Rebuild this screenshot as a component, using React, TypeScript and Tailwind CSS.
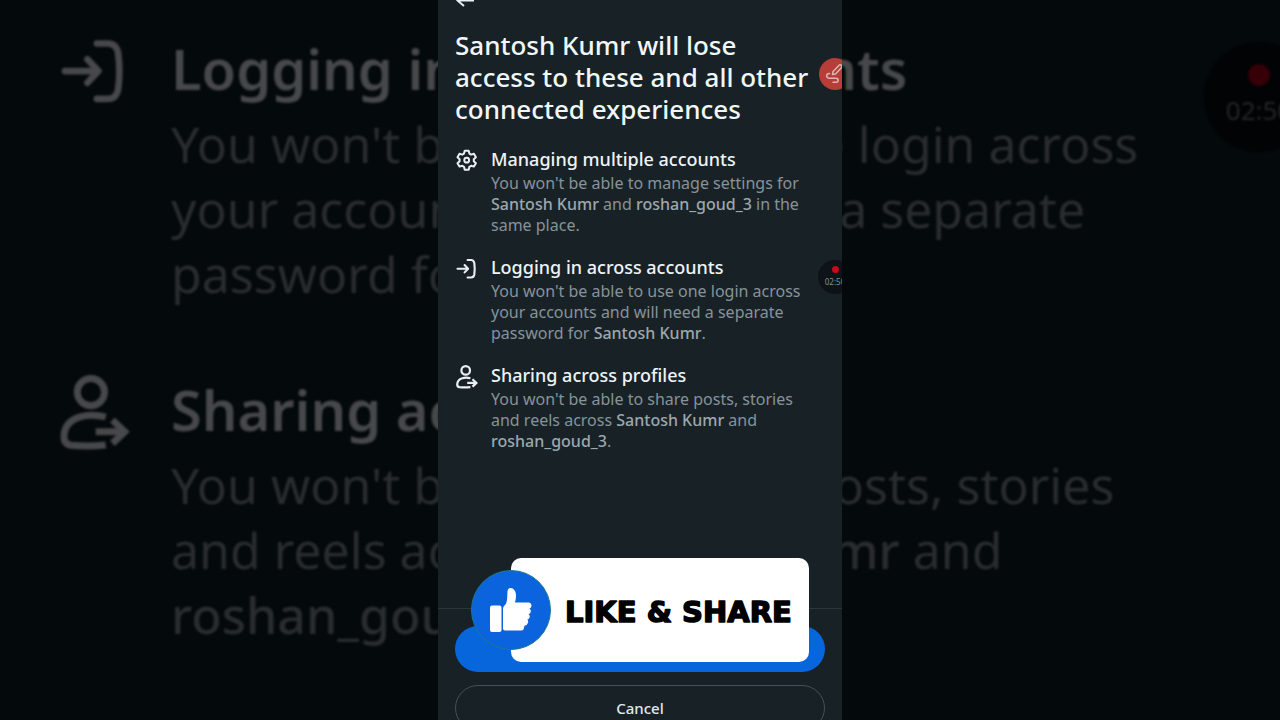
import type { ReactNode } from "react";
import { clsx } from "clsx";

type Experience = {
  title: string;
  icon: ReactNode;
  lines: ReactNode[];
};

function GearIcon() {
  return (
    <svg viewBox="0 0 24 24" fill="none" stroke="currentColor" strokeWidth="2" strokeLinejoin="round" className="size-full">
      <path d="M9.7 1.700h4l.7 2.900 1.700 1 2.800-.8 2 3.400-2.100 2v2l2.100 2-2 3.400-2.800-.8-1.700 1-.7 2.900h-4l-.7-2.900-1.700-1-2.800.8-2-3.400 2.100-2v-2l-2.100-2 2-3.400 2.800.8 1.700-1z" />
      <circle cx="11.700" cy="11.200" r="2.400" />
    </svg>
  );
}

function LoginIcon() {
  return (
    <svg viewBox="0 0 24 24" fill="none" stroke="currentColor" strokeWidth="2.100" strokeLinecap="round" strokeLinejoin="round" className="size-full">
      <path d="M2.500 11.700h10.500M9.600 8l3.500 3.700-3.500 3.700" />
      <path d="M12.600 3h3.500q2.600 0 3.200 3 .8 5.800 0 11.500-.6 3-3.200 3h-3.500" />
    </svg>
  );
}

function ShareProfileIcon() {
  return (
    <svg viewBox="0 0 24 24" fill="none" stroke="currentColor" strokeWidth="2.200" className="size-full">
      <circle cx="10.700" cy="5.400" r="4.300" />
      <path d="M15.400 13.200Q10.800 12.200 7.300 13.200 2.300 14.700 2.200 19.500q0 2.400 2.300 2.700 5.500.5 10.900-.1" />
      <path d="M12.200 17.900h9.300" />
      <path d="M17.500 14.200l3.900 3.700-3.900 3.700" />
    </svg>
  );
}

const experiences: Experience[] = [
  {
    title: "Managing multiple accounts",
    icon: <GearIcon />,
    lines: [
      "You won't be able to manage settings for",
      <><b>Santosh Kumr</b> and <b>roshan_goud_3</b> in the</>,
      "same place.",
    ],
  },
  {
    title: "Logging in across accounts",
    icon: <LoginIcon />,
    lines: [
      "You won't be able to use one login across",
      "your accounts and will need a separate",
      <>password for <b>Santosh Kumr</b>.</>,
    ],
  },
  {
    title: "Sharing across profiles",
    icon: <ShareProfileIcon />,
    lines: [
      "You won't be able to share posts, stories",
      <>and reels across <b>Santosh Kumr</b> and</>,
      <><b>roshan_goud_3</b>.</>,
    ],
  },
];

function ExperienceItem({ item, large = false }: { item: Experience; large?: boolean }) {
  return (
    <li className="flex whitespace-nowrap">
      <div className={clsx("shrink-0", large ? "w-[114px] pt-2" : "w-9 pt-0.5")}>
        <div className={clsx(large ? "size-[76px] text-[#47484a]" : "size-6 text-[#e9eff2]")}>{item.icon}</div>
      </div>
      <div>
        <h2 className={clsx(large ? "text-[56px] leading-[84px] font-semibold text-[#47484a]" : "text-lg leading-6 font-medium text-[#eef3f6]")}>
          {item.title}
        </h2>
        <p className={clsx("mt-0.5 [&_b]:font-medium", large ? "text-[50px] leading-[65px] text-[#2a2d2f]" : "text-base leading-[21px] text-[#87929a] [&_b]:text-[#9ca7ae]")}>
          {item.lines.map((line, i) => (
            <span key={i} className="block">
              {line}
            </span>
          ))}
        </p>
      </div>
    </li>
  );
}

function Backdrop() {
  return (
    <div aria-hidden="true" className="absolute inset-0 flex justify-center overflow-hidden">
      <ul className="flex w-[1166px] shrink-0 flex-col gap-[60px] pt-[26px] blur-[1px]">
        {experiences.slice(1).map((item) => (
          <ExperienceItem key={item.title} item={item} large />
        ))}
      </ul>
      <div className="absolute top-[42px] -right-[34px] flex size-[110px] flex-col items-center rounded-full bg-[#020304] pt-[22px] blur-[1px]">
        <span className="size-[22px] rounded-full bg-[#350008]" />
        <span className="mt-2.5 text-[26px] leading-7 text-[#222426]">02:50</span>
      </div>
    </div>
  );
}

function LikeSticker() {
  return (
    <div className="absolute bottom-[58px] left-[73px] flex h-[104px] w-[298px] items-center rounded-[10px] bg-white">
      <div className="-ml-10 flex size-20 shrink-0 items-center justify-center rounded-full border border-[#1c7a8a] bg-[#0b63dd]">
        <svg viewBox="0 0 42 44" fill="#fff" className="h-11 w-[42px]">
          <rect x="0" y="17.500" width="11.500" height="26.500" rx="2" />
          <path d="M13 20.500q0-2 2-3.500 2-2 2.200-7.500l.3-6.500q.3-3 3.300-3 4.200.5 5 5.500.6 4-.8 9h14q2.500.3 2.500 3 0 2.300-2 3 1.500.8 1.300 2.900-.2 2.200-2.200 2.800 1.400 1 1.100 3-.4 2-2.300 2.400 1 1.100.7 2.900-.7 2.700-3.600 3.300l-1 3.700q-.7 1-2.500 1H15q-2 0-2-2z" />
        </svg>
      </div>
      <svg viewBox="0 0 230 40" className="ml-3 h-10 w-[230px] shrink-0 font-['DejaVu_Sans',sans-serif]">
        <text x="2" y="32" fontSize="29" fontWeight="700" stroke="#000" strokeWidth="1.500" strokeLinejoin="round">
          LIKE &amp; SHARE
        </text>
      </svg>
    </div>
  );
}

function RecorderBubbles() {
  return (
    <>
      <div className="absolute top-[58px] left-[381px] flex size-8 items-center justify-center rounded-full bg-[#b63d38]">
        <svg viewBox="0 0 20 20" fill="none" stroke="#dcb5b3" strokeWidth="1.500" strokeLinecap="round" strokeLinejoin="round" className="size-5">
          <path d="M7.500 10.500l.6-3 6-6.300q1.200-.8 2.200.2t.3 2.200l-6.100 6.300z" />
          <path d="M4.500 9.500Q1.500 9.800 1.700 12t2.800 2.200h6.500q2.200.2 2.200 2T11 18.300H8" />
        </svg>
      </div>
      <div className="absolute top-[260px] left-[380px] flex size-[34px] flex-col items-center rounded-full bg-[#0d1316] pt-1.5">
        <span className="size-[7px] rounded-full bg-[#c40a1c]" />
        <span className="mt-1 text-[8px] leading-[9px] text-[#8a9094]">02:50</span>
      </div>
    </>
  );
}

export default function App() {
  return (
    <div className="relative h-screen overflow-hidden bg-[#04090b] font-['Noto_Sans',sans-serif]">
      <Backdrop />

      <div className="relative mx-auto flex h-full w-[404px] flex-col overflow-hidden bg-[#182226]">
        <header className="h-[29px] shrink-0 px-[17px]">
          <button aria-label="Back" className="-mt-3 block text-[#e9eff2]">
            <svg viewBox="0 0 24 24" fill="none" stroke="currentColor" strokeWidth="2" className="size-6">
              <path d="M19 12.500H3M9 6l-6.500 6.500L9 18" />
            </svg>
          </button>
        </header>

        <main className="flex-1 px-[17px]">
          <h1 className="text-[26px] leading-8 font-medium whitespace-nowrap text-[#f1f6f9]">
            Santosh Kumr will lose
            <br />
            access to these and all other
            <br />
            connected experiences
          </h1>
          <ul className="mt-[22px] flex flex-col gap-[19px]">
            {experiences.map((item) => (
              <ExperienceItem key={item.title} item={item} />
            ))}
          </ul>
        </main>

        <footer className="flex h-28 shrink-0 flex-col gap-[13px] border-t border-[#2b363b] px-[17px] pt-[17px]">
          <button aria-label="Continue" className="h-[46px] shrink-0 rounded-full bg-[#0866dc]" />
          <button className="h-[46px] shrink-0 rounded-full border border-[#465157] text-[15px] font-medium text-[#e1e8ec]">
            Cancel
          </button>
        </footer>

        <RecorderBubbles />
        <LikeSticker />
      </div>
    </div>
  );
}
